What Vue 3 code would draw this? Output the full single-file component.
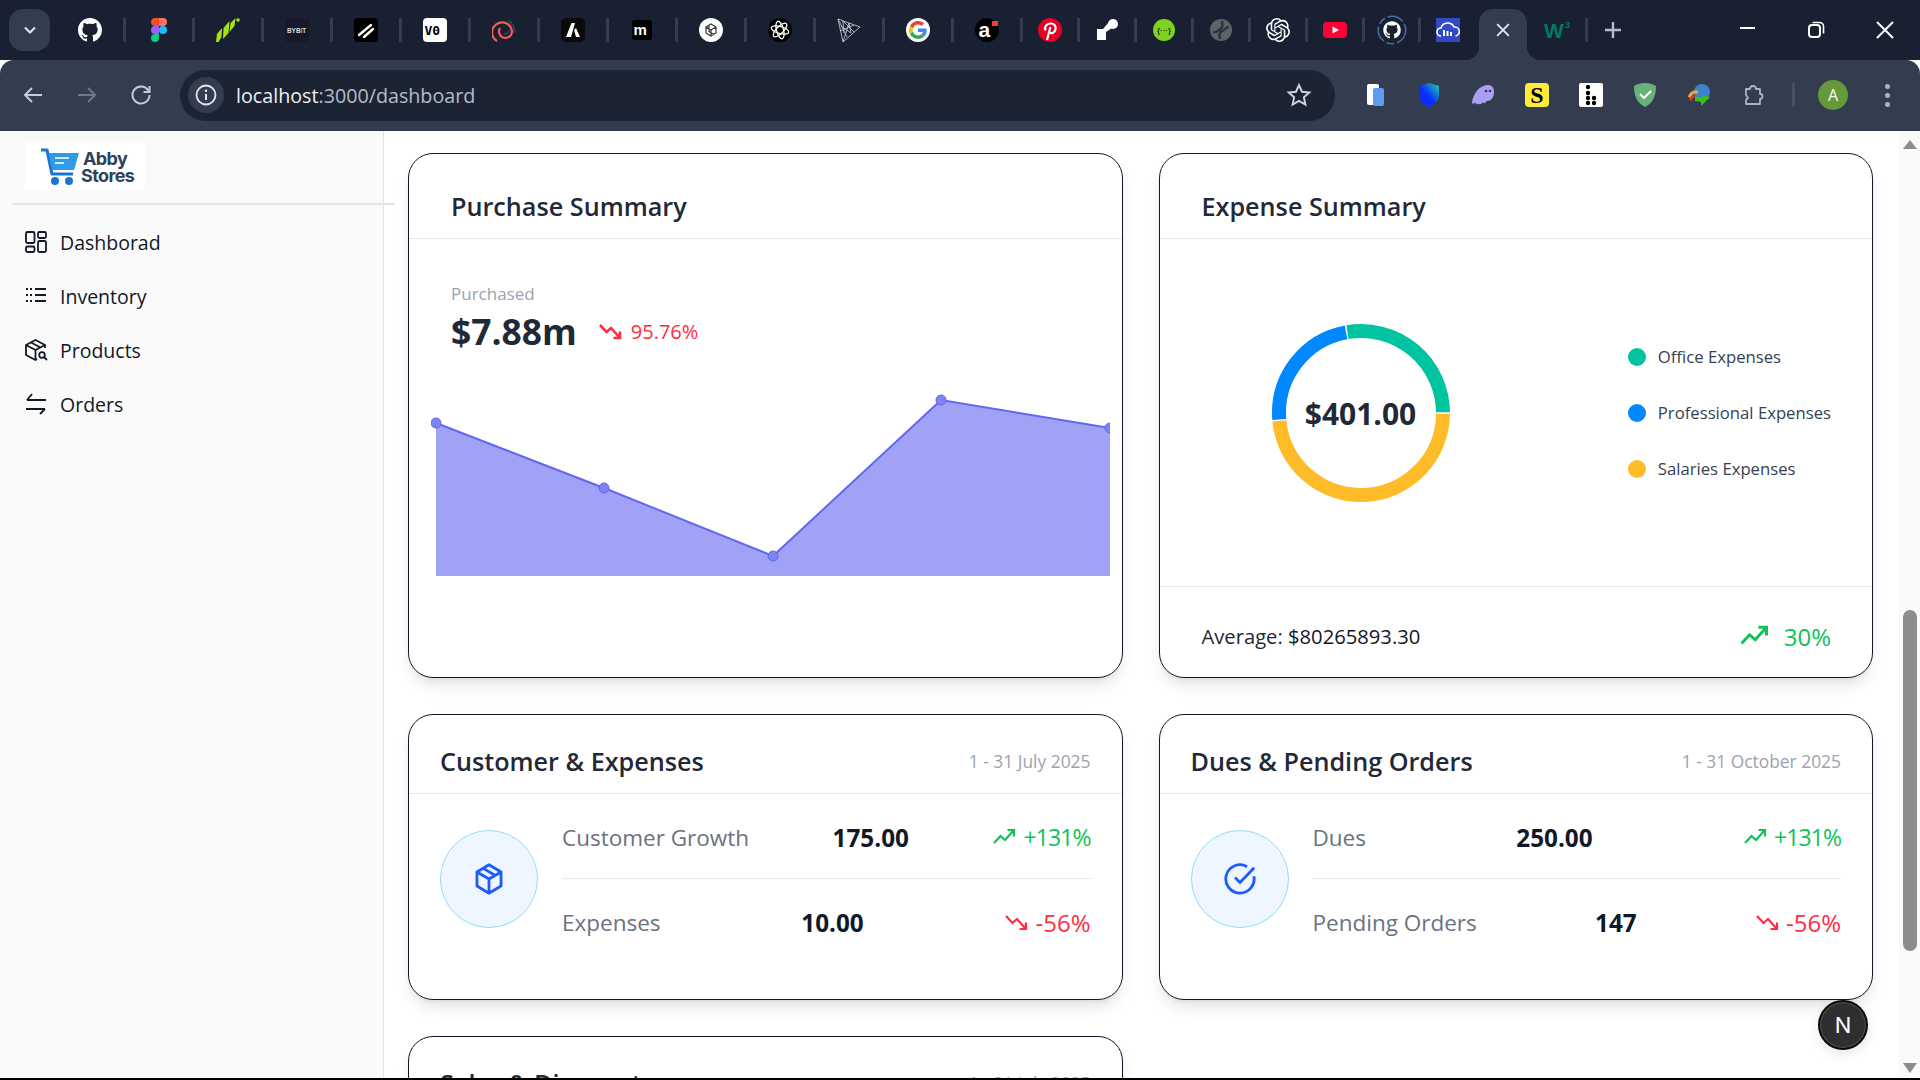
<template>
  <div class="window">
    <!-- Browser tab strip -->
    <div class="tabstrip">
      <button class="tab-search">
        <svg viewBox="0 0 24 24" width="20" height="20"><path d="M6 9l6 6 6-6" fill="none" stroke="#e5e7eb" stroke-width="2.4" /></svg>
      </button>
      <div
        v-for="tab in tabs"
        :key="tab.name"
        class="tab"
        :class="{ 'has-sep': tab.sep }"
        :style="{ width: tab.w + 'px' }"
      >
        <svg class="favicon" :class="{ big: tab.big }" viewBox="0 0 24 24" v-html="tab.icon"></svg>
      </div>
      <div class="tab-active">
        <svg viewBox="0 0 24 24" width="20" height="20"><path d="M5 5l14 14M19 5L5 19" stroke="#e8eaed" stroke-width="2.2" /></svg>
      </div>
      <div class="tab has-sep tab-w3">
        <svg class="favicon w3" viewBox="0 0 34 24">
          <text x="4" y="20" class="w3-w">W</text>
          <text x="25" y="10" class="w3-three">3</text>
        </svg>
      </div>
      <div class="new-tab">
        <svg viewBox="0 0 24 24" width="24" height="24"><path d="M12 4v16M4 12h16" stroke="#b4bdd0" stroke-width="2.4" /></svg>
      </div>
      <div class="window-controls">
        <svg viewBox="0 0 24 24" width="24" height="24"><path d="M5 10h15" stroke="#fff" stroke-width="2" /></svg>
        <svg viewBox="0 0 24 24" width="24" height="24"><rect x="5" y="7" width="11" height="12" rx="3" fill="none" stroke="#fff" stroke-width="2" /><path d="M8.500 4.500h7a4 4 0 0 1 4 4v7" fill="none" stroke="#fff" stroke-width="1.600" /></svg>
        <svg viewBox="0 0 24 24" width="24" height="24"><path d="M4 4l16 16M20 4L4 20" stroke="#fff" stroke-width="2" /></svg>
      </div>
    </div>

    <!-- Browser toolbar -->
    <div class="toolbar">
      <div class="nav-buttons">
        <svg viewBox="0 0 24 24" width="24" height="24"><path d="M21 12H4M11 5l-7 7 7 7" fill="none" stroke="#c4cbd9" stroke-width="2" /></svg>
        <svg viewBox="0 0 24 24" width="24" height="24"><path d="M3 12h17M13 5l7 7-7 7" fill="none" stroke="#6f788a" stroke-width="2" /></svg>
        <svg viewBox="0 0 24 24" width="24" height="24"><path d="M19.500 8A8.500 8.500 0 1 0 20.500 12" fill="none" stroke="#c4cbd9" stroke-width="2" /><path d="M20.500 3v6h-6" fill="none" stroke="#c4cbd9" stroke-width="2" /></svg>
      </div>
      <div class="omnibox">
        <div class="site-info">
          <svg viewBox="0 0 24 24" width="24" height="24"><circle cx="12" cy="12" r="9.500" fill="none" stroke="#e5e7eb" stroke-width="1.800" /><path d="M12 11v6" stroke="#e5e7eb" stroke-width="2" /><circle cx="12" cy="7.700" r="1.200" fill="#e5e7eb" /></svg>
        </div>
        <span class="url"><span class="url-host">localhost</span>:3000/dashboard</span>
        <svg class="star" viewBox="0 0 24 24" width="26" height="26"><path d="M12 2.800l2.800 6.200 6.700.7-5 4.500 1.400 6.600L12 17.400l-5.900 3.400 1.400-6.600-5-4.500 6.700-.7z" fill="none" stroke="#d1d5db" stroke-width="1.800" /></svg>
      </div>
      <div class="extensions">
        <svg v-for="ext in extensions" :key="ext.name" viewBox="0 0 24 24" width="24" height="24" v-html="ext.icon"></svg>
        <span class="toolbar-sep"></span>
        <span class="avatar">A</span>
        <span class="menu-dots"><i></i><i></i><i></i></span>
      </div>
    </div>

    <div class="page">
      <!-- Sidebar -->
      <aside class="sidebar">
        <div class="logo">
          <svg viewBox="0 0 40 38" width="40" height="38">
            <path d="M1 2h6l5 24h21" fill="none" stroke="#1a73d9" stroke-width="3.200" stroke-linejoin="round" />
            <path d="M9 5h30l-5 17H12z" fill="#2f9be6" />
            <path d="M15 10h14M15 15h9" stroke="#cfe9fb" stroke-width="2" />
            <circle cx="15" cy="33" r="4" fill="#1a73d9" />
            <circle cx="29" cy="33" r="4" fill="#1a73d9" />
          </svg>
          <div class="logo-text">
            <span class="logo-abby">Abby</span>
            <span>Stores</span>
          </div>
        </div>
        <div class="sidebar-divider"></div>
        <nav class="menu">
          <a v-for="item in menu" :key="item.label" class="menu-item">
            <svg viewBox="0 0 24 24" width="24" height="24" v-html="item.icon"></svg>
            <span>{{ item.label }}</span>
          </a>
        </nav>
      </aside>

      <!-- Dashboard cards -->
      <main class="content">
        <section class="card">
          <header class="card-head tall">
            <h2>Purchase Summary</h2>
          </header>
          <div class="purchase-stat">
            <div class="stat-label">Purchased</div>
            <div class="stat-row">
              <span class="stat-value">$7.88m</span>
              <svg viewBox="0 0 24 24" width="30" height="24"><path :d="trendDown" fill="none" stroke="#ff2d3f" stroke-width="2.600" /></svg>
              <span class="stat-change">95.76%</span>
            </div>
          </div>
          <svg class="area-chart" viewBox="0 0 680 190" width="680" height="190">
            <defs>
              <clipPath id="plot"><rect x="0" y="0" width="679" height="190" /></clipPath>
            </defs>
            <g clip-path="url(#plot)">
              <polygon :points="areaPoints" fill="#a0a3f5" />
              <polyline :points="linePoints" fill="none" stroke="#6366f1" stroke-width="2" />
              <circle v-for="p in chartPoints" :key="p[0]" :cx="p[0]" :cy="p[1]" r="5" fill="#7f82f3" stroke="#6366f1" stroke-width="1" />
            </g>
          </svg>
        </section>

        <section class="card">
          <header class="card-head tall">
            <h2>Expense Summary</h2>
          </header>
          <div class="expense-body">
            <div class="donut">
              <svg viewBox="0 0 180 180" width="180" height="180">
                <path v-for="seg in segments" :key="seg.color" :d="seg.d" fill="none" :stroke="seg.color" stroke-width="14" />
              </svg>
              <span class="donut-value">$401.00</span>
            </div>
            <ul class="legend">
              <li v-for="l in legend" :key="l.label">
                <i :style="{ background: l.color }"></i>{{ l.label }}
              </li>
            </ul>
          </div>
          <footer class="expense-foot">
            <span class="average">Average: <b>$80265893.30</b></span>
            <span class="foot-change">
              <svg viewBox="0 0 24 24" width="36" height="30"><path :d="trendUp" fill="none" stroke="#0fc156" stroke-width="2.400" /></svg>
              30%
            </span>
          </footer>
        </section>

        <section v-for="card in statCards" :key="card.title" class="card">
          <header class="card-head">
            <h2>{{ card.title }}</h2>
            <span class="date">{{ card.date }}</span>
          </header>
          <div class="stat-body">
            <div class="icon-circle">
              <svg viewBox="0 0 24 24" width="34" height="34" v-html="card.icon"></svg>
            </div>
            <div class="stat-rows">
              <div v-for="row in card.rows" :key="row.label" class="stat-line">
                <span class="line-label">{{ row.label }}</span>
                <span class="line-value">{{ row.value }}</span>
                <span class="line-change" :class="row.up ? 'up' : 'down'">
                  <svg viewBox="0 0 24 24" width="24" height="24"><path :d="row.up ? trendUp : trendDown" fill="none" stroke="currentColor" stroke-width="2.200" /></svg>
                  {{ row.change }}
                </span>
              </div>
            </div>
          </div>
        </section>
      </main>

      <!-- Scrollbar -->
      <div class="scrollbar">
        <i class="arrow-up"></i>
        <div class="thumb"></div>
        <i class="arrow-down"></i>
      </div>

      <button class="dev-badge">N</button>
    </div>
  </div>
</template>

<script setup>
const trendUp = 'M2 18l6.500-7 4.500 4 9-10M15.500 5H22v6.500'
const trendDown = 'M2 6l6.500 7 4.500-4 9 10M15.500 19H22v-6.500'

const gh = 'M8 0C3.58 0 0 3.58 0 8c0 3.54 2.29 6.53 5.47 7.59.4.07.55-.17.55-.38 0-.19-.01-.82-.01-1.49-2.01.37-2.53-.49-2.69-.94-.09-.23-.48-.94-.82-1.13-.28-.15-.68-.52-.01-.53.63-.01 1.08.58 1.23.82.72 1.21 1.87.87 2.33.66.07-.52.28-.87.51-1.07-1.78-.2-3.64-.89-3.64-3.95 0-.87.31-1.59.82-2.15-.08-.2-.36-1.02.08-2.12 0 0 .67-.21 2.2.82.64-.18 1.32-.27 2-.27.68 0 1.36.09 2 .27 1.53-1.04 2.2-.82 2.2-.82.44 1.1.16 1.92.08 2.12.51.56.82 1.27.82 2.15 0 3.07-1.87 3.75-3.65 3.95.29.25.54.73.54 1.48 0 1.07-.01 1.93-.01 2.2 0 .21.15.46.55.38A8.013 8.013 0 0016 8c0-4.42-3.58-8-8-8z'

const gpt = 'M22.2819 9.8211a5.9847 5.9847 0 0 0-.5157-4.9108 6.0462 6.0462 0 0 0-6.5098-2.9A6.0651 6.0651 0 0 0 4.9807 4.1818a5.9847 5.9847 0 0 0-3.9977 2.9 6.0462 6.0462 0 0 0 .7427 7.0966 5.98 5.98 0 0 0 .511 4.9107 6.051 6.051 0 0 0 6.5146 2.9001A5.9847 5.9847 0 0 0 13.2599 24a6.0557 6.0557 0 0 0 5.7718-4.2058 5.9894 5.9894 0 0 0 3.9977-2.9001 6.0557 6.0557 0 0 0-.7475-7.0729zm-9.022 12.6081a4.4755 4.4755 0 0 1-2.8764-1.0408l.1419-.0804 4.7783-2.7582a.7948.7948 0 0 0 .3927-.6813v-6.7369l2.02 1.1686a.071.071 0 0 1 .038.052v5.5826a4.504 4.504 0 0 1-4.4945 4.4944zm-9.6607-4.1254a4.4708 4.4708 0 0 1-.5346-3.0137l.142.0852 4.783 2.7582a.7712.7712 0 0 0 .7806 0l5.8428-3.3685v2.3324a.0804.0804 0 0 1-.0332.0615L9.74 19.9502a4.4992 4.4992 0 0 1-6.1408-1.6464zM2.3408 7.8956a4.485 4.485 0 0 1 2.3655-1.9728V11.6a.7664.7664 0 0 0 .3879.6765l5.8144 3.3543-2.0201 1.1685a.0757.0757 0 0 1-.071 0l-4.8303-2.7865A4.504 4.504 0 0 1 2.3408 7.872zm16.5963 3.8558L13.1038 8.364 15.1192 7.2a.0757.0757 0 0 1 .071 0l4.8303 2.7913a4.4944 4.4944 0 0 1-.6765 8.1042v-5.6772a.79.79 0 0 0-.407-.667zm2.0107-3.0231l-.142-.0852-4.7735-2.7818a.7759.7759 0 0 0-.7854 0L9.409 9.2297V6.8974a.0662.0662 0 0 1 .0284-.0615l4.8303-2.7866a4.4992 4.4992 0 0 1 6.6802 4.66zM8.3065 12.863l-2.02-1.1638a.0804.0804 0 0 1-.038-.0567V6.0742a4.4992 4.4992 0 0 1 7.3757-3.4537l-.142.0805L8.704 5.459a.7948.7948 0 0 0-.3927.6813zm1.0976-2.3654l2.602-1.4998 2.6069 1.4998v2.9994l-2.5974 1.4997-2.6067-1.4997Z'

const tabs = [
  { name: 'github', w: 69, sep: true, icon: `<path transform="scale(1.5)" fill="#fff" d="${gh}"/>` },
  { name: 'figma', w: 69, sep: true, icon: '<path fill="#f24e1e" d="M12 0H8a4 4 0 0 0 0 8h4z"/><path fill="#ff7262" d="M12 0h4a4 4 0 0 1 0 8h-4z"/><path fill="#a259ff" d="M12 8H8a4 4 0 0 0 0 8h4z"/><circle cx="16" cy="12" r="4" fill="#1abcfe"/><path fill="#0acf83" d="M8 16h4v4a4 4 0 1 1-4-4z"/>' },
  { name: 'chart', w: 69, sep: true, icon: '<path fill="#a6e313" d="M0 24l1-8 5-6-.5 9-3 5zM7 21l.5-11 6-7-1 12zM13.500 14l1-9 5-5-1 8z"/><circle cx="22" cy="2" r="1.800" fill="#a6e313"/>' },
  { name: 'bybit', w: 69, sep: true, icon: '<rect width="24" height="24" fill="#15192b"/><text x="2" y="14.500" class="fav-small" fill="#d8dbe2">BYB<tspan fill="#f7a600">I</tspan>T</text>' },
  { name: 'slash', w: 69, sep: true, icon: '<rect width="24" height="24" rx="4" fill="#000"/><path d="M5 17L17 7M10 19l9-8" stroke="#fff" stroke-width="2.400" stroke-linecap="round"/>' },
  { name: 'v0', w: 69, sep: true, icon: '<rect width="24" height="24" rx="4" fill="#fff"/><text x="1.500" y="16.500" class="fav-mono" font-size="13" fill="#000">V0</text>' },
  { name: 'spiral', w: 69, sep: true, icon: '<path d="M16 3a10 10 0 0 1 6 12M12 16a5 5 0 0 0 5-4" fill="none" stroke="#333d4f" stroke-width="2"/><path d="M5 23A10 10 0 1 1 20 13a6.500 6.500 0 1 1-12-3" fill="none" stroke="#f45b5b" stroke-width="2.200"/>' },
  { name: 'lambda', w: 69, sep: true, icon: '<rect width="24" height="24" rx="5" fill="#0a0a0a"/><path d="M5 19L10.500 5h3.500l-4 14zM13 12l2-2 4 9h-4z" fill="#fff"/>' },
  { name: 'medium', w: 69, sep: true, icon: '<rect x="2" y="2" width="20" height="20" rx="3" fill="#000"/><text x="3.500" y="17" class="fav-bold" font-size="15" fill="#fff">m</text>' },
  { name: 'cube', w: 69, sep: true, icon: '<circle cx="12" cy="12" r="12" fill="#fff"/><path d="M7 9l5-3 5 3v6l-5 3-5-3zM10 7.500v6l5 3M7 9l5 3v6M12 12l5-3" fill="none" stroke="#333" stroke-width="1.200"/>' },
  { name: 'atom', w: 69, sep: true, icon: '<circle cx="12" cy="12" r="12" fill="#000"/><g fill="none" stroke="#fff" stroke-width="1.300"><ellipse cx="12" cy="12" rx="9" ry="3.500" transform="rotate(15 12 12)"/><ellipse cx="12" cy="12" rx="9" ry="3.500" transform="rotate(75 12 12)"/><ellipse cx="12" cy="12" rx="9" ry="3.500" transform="rotate(135 12 12)"/></g>' },
  { name: 'mesh', w: 69, sep: true, icon: '<g fill="none" stroke="#c0c5cf" stroke-width=".9"><path d="M1 1l22 8-17 15zM6 3l1 12M12 5L6 24M17 7L3 13M1 1l9 18M6 3l11 11M12 5l2 10M4 8l10 7"/></g>' },
  { name: 'google', w: 69, sep: true, icon: '<circle cx="12" cy="12" r="12" fill="#fff"/><g transform="translate(3 3) scale(.375)"><path fill="#EA4335" d="M24 9.500c3.540 0 6.710 1.220 9.210 3.600l6.850-6.850C35.900 2.380 30.470 0 24 0 14.620 0 6.510 5.380 2.560 13.220l7.980 6.190C12.430 13.720 17.740 9.500 24 9.500z"/><path fill="#4285F4" d="M46.980 24.550c0-1.570-.15-3.090-.38-4.550H24v9.020h12.940c-.58 2.960-2.260 5.480-4.780 7.180l7.730 6c4.510-4.180 7.090-10.360 7.090-17.650z"/><path fill="#FBBC05" d="M10.530 28.590c-.48-1.450-.76-2.990-.76-4.590s.27-3.140.76-4.590l-7.980-6.190C.92 16.460 0 20.120 0 24c0 3.880.92 7.540 2.560 10.780l7.970-6.190z"/><path fill="#34A853" d="M24 48c6.480 0 11.930-2.130 15.890-5.810l-7.730-6c-2.150 1.450-4.920 2.300-8.160 2.300-6.260 0-11.570-4.220-13.470-9.910l-7.980 6.190C6.510 42.620 14.620 48 24 48z"/></g>' },
  { name: 'aparat', w: 69, sep: true, icon: '<circle cx="12" cy="12" r="12" fill="#000"/><text x="3.500" y="19" class="fav-bold" font-size="21" fill="#fff">a</text><rect x="17" y="3" width="6" height="5" fill="#ea4335"/>' },
  { name: 'pinterest', w: 57, sep: true, icon: '<circle cx="12" cy="12" r="12" fill="#e60023"/><path d="M9 22l3.400-13M7.500 12.500C6 9 8.500 5.500 12.500 5.500s5.800 2.800 5 6-3.800 4.500-5.500 3" fill="none" stroke="#fff" stroke-width="2.200"/>' },
  { name: 'flag', w: 57, sep: true, icon: '<path fill="#fff" d="M2 11h6l6-7 3 6-6 4v8H2z"/><circle cx="18" cy="6" r="5" fill="#fff"/>' },
  { name: 'braces', w: 57, sep: true, icon: '<circle cx="12" cy="12" r="11" fill="#7ed321"/><text x="12" y="15" text-anchor="middle" class="fav-bold" font-size="8" fill="#1c3a10">{···}</text>' },
  { name: 'globe', w: 57, sep: true, icon: '<circle cx="12" cy="12" r="11" fill="#5f6368"/><path d="M4 14c4 1 5-2 7-3s3-2 2-8M20 9c-3 0-4 3-7 4s-3 4-2 8" fill="none" stroke="#2a3242" stroke-width="2.400"/>' },
  { name: 'chatgpt', w: 57, sep: true, icon: `<path fill="#fff" d="${gpt}"/>` },
  { name: 'youtube', w: 57, sep: true, icon: '<rect y="4" width="24" height="16" rx="4" fill="#ff0033"/><path d="M9.500 8.500l6.500 3.500-6.500 3.500z" fill="#fff"/>' },
  { name: 'github-ring', w: 56, sep: true, big: true, icon: `<circle cx="12" cy="12" r="11" fill="none" stroke="#4d6a96" stroke-width="1.300" stroke-dasharray="13 2.500 6 2.500"/><path transform="translate(5 5) scale(.875)" fill="#fff" d="${gh}"/>` },
  { name: 'cloud', w: 56, sep: false, icon: '<rect width="24" height="24" fill="#3347c9"/><path d="M5 18a4 4 0 0 1 0-8 7 7 0 0 1 13-1 4.500 4.500 0 0 1 1.500 9" fill="none" stroke="#fff" stroke-width="1.600"/><path d="M8 12v6M11.500 13v5M15 14v4" stroke="#fff" stroke-width="2"/>' }
]

const extensions = [
  { name: 'pages', icon: '<rect x="4" y="1" width="12" height="21" rx="2" fill="#fff"/><rect x="10" y="5" width="11" height="18" rx="2" fill="#5e9df2"/>' },
  { name: 'shield', icon: '<defs><linearGradient id="sh" x1="0" y1="1" x2="1" y2="0"><stop offset=".45" stop-color="#0a2dff"/><stop offset="1" stop-color="#22d3a0"/></linearGradient></defs><path d="M12 0l10 3v9c0 6-5 10-10 12C7 22 2 18 2 12V3z" fill="url(#sh)"/>' },
  { name: 'ghost', icon: '<path d="M1 20C2 10 9 2 17 2c4 0 6 3 6 7 0 6-3 9-7 9-1 0-1 3-3 2-1-1-2 0-3 1s-2-1-3 0-2 0-2-1-3 2-4 0z" fill="#ab9ff2"/><circle cx="15" cy="8" r="1.300" fill="#3c315b"/><circle cx="19" cy="8" r="1.300" fill="#3c315b"/>' },
  { name: 'sans', icon: '<rect width="24" height="24" rx="4" fill="#ffe93b"/><text x="12" y="20" text-anchor="middle" class="fav-serif" font-size="24" fill="#000">S</text>' },
  { name: 'dots', icon: '<rect width="24" height="24" rx="2" fill="#fff"/><g fill="#000"><circle cx="9" cy="4" r="2.200"/><circle cx="9" cy="10" r="2.200"/><circle cx="9" cy="15" r="2.200"/><circle cx="15" cy="15" r="2.200"/><circle cx="9" cy="20" r="2.200"/><circle cx="15" cy="20" r="2.200"/></g>' },
  { name: 'adguard', icon: '<path d="M12 0C8 0 4 1 1 3c0 10 3 17 11 21 8-4 11-11 11-21-3-2-7-3-11-3z" fill="#68b178"/><path d="M7 11l4 4 7-7" fill="none" stroke="#fff" stroke-width="2"/>' },
  { name: 'idm', icon: '<circle cx="15" cy="9" r="8" fill="#3f7fd0"/><path d="M1 14c1-6 7-8 11-6l-2 3c-3-1-5 0-6 4z" fill="#e8a33a"/><path d="M2 17c1-3 3-5 6-5l-1 3c-1 0-2 1-2 3z" fill="#d1392c"/><path d="M8 13l7 2 1-3 7 2-9 9 0-4-6-1z" fill="#35c11f"/>' },
  { name: 'puzzle', icon: '<path d="M5 6h4a3 3 0 0 1 6 0h4v5a2.500 2.500 0 0 1 0 5v5H5v-4l2-2-2-3z" fill="none" stroke="#aab4c8" stroke-width="1.800" stroke-linejoin="round"/>' }
]

const menu = [
  { label: 'Dashborad', icon: '<g fill="none" stroke="#111827" stroke-width="1.800"><rect x="2" y="2" width="8.500" height="11" rx="1.500"/><rect x="14" y="2" width="8" height="6" rx="1.500"/><rect x="2" y="16.500" width="8.500" height="5.500" rx="1.500"/><rect x="14" y="11" width="8" height="11" rx="1.500"/></g>' },
  { label: 'Inventory', icon: '<path d="M2 5h2M6 5h2M2 11h2M6 11h2M2 17h2M6 17h2M11 5h11M11 11h11M11 17h11" fill="none" stroke="#111827" stroke-width="1.800"/>' },
  { label: 'Products', icon: '<g fill="none" stroke="#111827" stroke-width="1.800"><path d="M21 10V7l-9.500-5L2 7v10l9.500 5 1.500-1"/><path d="M2 7l9.500 5 9.500-5M11.500 12v10M7 4.500L16.500 9.500"/><circle cx="18" cy="17" r="2.800"/><path d="M20 19l3 3"/></g>' },
  { label: 'Orders', icon: '<path d="M22 8H3M8 2L3 8M2 17h19M16 22l5-5" fill="none" stroke="#111827" stroke-width="1.800"/>' }
]

// chart coordinates are relative to the svg box
const chartPoints = [[5, 33], [173, 98], [342, 166], [510, 10], [679, 38]]
const linePoints = chartPoints.map(p => p.join(',')).join(' ')
const areaPoints = `5,186 ${linePoints} 679,186`

// donut arcs, angle in degrees clockwise from 3 o'clock
const arc = (from, to) => {
  const r = 82
  const pt = a => [90 + r * Math.cos(a * Math.PI / 180), 90 + r * Math.sin(a * Math.PI / 180)]
  const [x1, y1] = pt(from)
  const [x2, y2] = pt(to)
  return `M${x1.toFixed(2)} ${y1.toFixed(2)}A${r} ${r} 0 ${to - from > 180 ? 1 : 0} 1 ${x2.toFixed(2)} ${y2.toFixed(2)}`
}
const segments = [
  { color: '#ffbb28', d: arc(0.5, 174.5) },
  { color: '#0088fe', d: arc(175.5, 259.5) },
  { color: '#00c49f', d: arc(260.5, 359.5) }
]

const legend = [
  { label: 'Office Expenses', color: '#00c49f' },
  { label: 'Professional Expenses', color: '#0088fe' },
  { label: 'Salaries Expenses', color: '#ffbb28' }
]

const boxIcon = '<path d="M12 2l8.500 5v10L12 22l-8.500-5V7zM3.500 7l8.500 5 8.500-5M12 12v10M8 4.500l8.500 5" fill="none" stroke="#1d5cff" stroke-width="2" stroke-linejoin="round"/>'
const checkIcon = '<path d="M21.800 10A10 10 0 1 1 17 3.300" fill="none" stroke="#1d5cff" stroke-width="2"/><path d="M8.500 11l3.500 3.500L22 4" fill="none" stroke="#1d5cff" stroke-width="2"/>'

const statCards = [
  {
    title: 'Customer & Expenses',
    date: '1 - 31 July 2025',
    icon: boxIcon,
    rows: [
      { label: 'Customer Growth', value: '175.00', change: '+131%', up: true },
      { label: 'Expenses', value: '10.00', change: '-56%', up: false }
    ]
  },
  {
    title: 'Dues & Pending Orders',
    date: '1 - 31 October 2025',
    icon: checkIcon,
    rows: [
      { label: 'Dues', value: '250.00', change: '+131%', up: true },
      { label: 'Pending Orders', value: '147', change: '-56%', up: false }
    ]
  },
  {
    title: 'Sales & Discount',
    date: '1 - 31 July 2025',
    icon: boxIcon,
    rows: [
      { label: 'Sales', value: '175.00', change: '+131%', up: true },
      { label: 'Discount', value: '10.00', change: '-56%', up: false }
    ]
  }
]
</script>

<style>
html, body {
  margin: 0;
  height: 100%;
  overflow: hidden;
  background: #000;
}
.fav-small { font: 700 6.4px "Liberation Sans", sans-serif; }
.fav-bold { font-family: "Liberation Sans", sans-serif; font-weight: 700; }
.fav-serif { font-family: "Liberation Serif", serif; font-weight: 700; }
.fav-mono { font-family: "DejaVu Sans Mono", monospace; font-weight: 700; }
</style>

<style scoped>
.window {
  width: 1920px;
  height: 1078px;
  display: flex;
  flex-direction: column;
  overflow: hidden;
  background: #fff;
  font-family: "Open Sans", "Liberation Sans", sans-serif;
  color: #1f2937;
}

/* tab strip */
.tabstrip {
  height: 60px;
  flex: none;
  display: flex;
  align-items: flex-start;
  background: #182032;
  padding: 9px 0 0 9px;
  box-sizing: border-box;
}
.tab-search {
  width: 41px;
  height: 42px;
  margin-right: 5.5px;
  padding: 0;
  border: 0;
  border-radius: 14px;
  background: #333d4f;
  display: flex;
  align-items: center;
  justify-content: center;
}
.tab {
  position: relative;
  height: 42px;
  flex: none;
  display: flex;
  align-items: center;
  justify-content: center;
}
.tab.has-sep::after {
  content: '';
  position: absolute;
  right: -1.5px;
  top: 9px;
  width: 3px;
  height: 24px;
  background: #333d4f;
}
.favicon {
  width: 24px;
  height: 24px;
}
.favicon.big {
  width: 30px;
  height: 30px;
}
.tab-active {
  position: relative;
  width: 48px;
  height: 51px;
  margin-left: 3px;
  flex: none;
  background: #333d4f;
  border-radius: 14px 14px 0 0;
  display: flex;
  align-items: center;
  justify-content: center;
  padding-bottom: 9px;
  box-sizing: border-box;
}
.tab-active::before,
.tab-active::after {
  content: '';
  position: absolute;
  bottom: 0;
  width: 14px;
  height: 14px;
}
.tab-active::before {
  left: -14px;
  background: radial-gradient(circle at 0 0, transparent 14px, #333d4f 14.5px);
}
.tab-active::after {
  right: -14px;
  background: radial-gradient(circle at 100% 0, transparent 14px, #333d4f 14.5px);
}
.tab-w3 {
  width: 60px;
}
.favicon.w3 {
  width: 34px;
  height: 24px;
}
.w3-w {
  font: 700 21px "Liberation Sans", sans-serif;
  fill: #00795e;
}
.w3-three {
  font: 700 9px "Liberation Sans", sans-serif;
  fill: #00795e;
}
.new-tab {
  width: 52px;
  height: 42px;
  display: flex;
  align-items: center;
  justify-content: center;
}
.window-controls {
  margin-left: auto;
  width: 185px;
  height: 42px;
  padding-right: 23px;
  box-sizing: border-box;
  display: flex;
  align-items: center;
  justify-content: space-between;
}

/* toolbar */
.toolbar {
  height: 70px;
  flex: none;
  display: flex;
  align-items: center;
  background: #333d4f;
  border-radius: 14px 14px 0 0;
  box-sizing: border-box;
}
.nav-buttons {
  width: 180px;
  padding: 0 27px 0 21px;
  box-sizing: border-box;
  display: flex;
  justify-content: space-between;
  flex: none;
}
.omnibox {
  width: 1155px;
  height: 51px;
  flex: none;
  box-sizing: border-box;
  background: #1c2434;
  border-radius: 26px;
  display: flex;
  align-items: center;
  padding: 0 23px 0 8px;
}
.site-info {
  width: 36px;
  height: 36px;
  border-radius: 50%;
  background: #333d4f;
  display: flex;
  align-items: center;
  justify-content: center;
}
.url {
  margin-left: 12px;
  font-size: 19.7px;
  color: #b5bcc9;
  flex: 1;
}
.url-host {
  color: #eef0f4;
}
.extensions {
  flex: 1;
  display: flex;
  align-items: center;
  padding-left: 28px;
  gap: 30px;
}
.toolbar-sep {
  width: 3px;
  height: 24px;
  background: #475164;
  margin-left: -3px;
}
.avatar {
  width: 30px;
  height: 30px;
  margin-left: -7px;
  border-radius: 50%;
  background: #65993a;
  color: #fff;
  font-size: 16px;
  display: flex;
  align-items: center;
  justify-content: center;
}
.menu-dots {
  display: flex;
  flex-direction: column;
  gap: 4px;
  margin-left: 6.5px;
}
.menu-dots i {
  width: 5px;
  height: 5px;
  border-radius: 50%;
  background: #aab4c8;
}

/* page */
.page {
  flex: 1;
  min-height: 0;
  display: flex;
  border-top: 1px solid #2d3748;
  position: relative;
}
.sidebar {
  width: 384px;
  flex: none;
  box-sizing: border-box;
  background: #fafafa;
  border-right: 1px solid #e5e5e5;
}
.logo {
  width: 120px;
  height: 47px;
  margin: 12px 0 0 25px;
  background: #fff;
  display: flex;
  align-items: center;
  padding-left: 15px;
  box-sizing: border-box;
  gap: 1px;
}
.logo-text {
  display: flex;
  flex-direction: column;
  font: 700 18px/17px "Inter", sans-serif;
  color: #2c4257;
  letter-spacing: -0.6px;
}
.logo-abby {
  margin-left: 2px;
}
.sidebar-divider {
  width: 383px;
  height: 2px;
  margin: 13px 0 0 12px;
  background: #e5e5e5;
}
.menu {
  display: flex;
  flex-direction: column;
  margin-top: 10px;
}
.menu-item {
  height: 54px;
  padding-left: 24px;
  display: flex;
  align-items: center;
  gap: 12px;
  font-size: 19.5px;
  color: #111827;
}

/* cards */
.content {
  flex: 1;
  min-width: 0;
  overflow: hidden;
  padding: 22px 26px 0 24px;
  display: grid;
  grid-template-columns: 1fr 1fr;
  grid-auto-rows: 286px;
  grid-template-rows: 525px;
  gap: 36px;
}
.card {
  border: 1px solid #111827;
  border-radius: 25px;
  background: #fff;
  box-shadow: 0 10px 15px -3px rgba(0, 0, 0, 0.1), 0 4px 6px -4px rgba(0, 0, 0, 0.1);
  box-sizing: border-box;
  display: flex;
  flex-direction: column;
}
.card-head {
  height: 79px;
  flex: none;
  box-sizing: border-box;
  border-bottom: 1px solid #e5e7eb;
  padding: 28px 31px 0;
  display: flex;
  justify-content: space-between;
}
.card-head.tall {
  height: 85px;
  padding: 34px 42px 0;
}
.card-head h2 {
  margin: 0;
  font-size: 25.2px;
  line-height: 36px;
  font-weight: 600;
  color: #1f2937;
}
.date {
  font-size: 17.4px;
  line-height: 36px;
  color: #9ca3af;
}

/* purchase */
.purchase-stat {
  padding: 43px 42px 0;
}
.stat-label {
  font-size: 17px;
  line-height: 24px;
  color: #9ca3af;
}
.stat-row {
  margin-top: 3px;
  height: 44px;
  display: flex;
  align-items: center;
}
.stat-value {
  font-size: 35.4px;
  font-weight: 700;
  color: #1f2937;
  margin-right: 18px;
}
.stat-change {
  font-size: 20px;
  color: #ff2d3f;
  margin-left: 6px;
}
.area-chart {
  display: block;
  margin: 37px 0 0 22px;
  overflow: visible;
}

/* expense */
.expense-body {
  height: 347px;
  flex: none;
  box-sizing: border-box;
  padding: 0 41px 0 111px;
  display: flex;
  align-items: center;
  justify-content: space-between;
}
.donut {
  position: relative;
  width: 180px;
  height: 180px;
}
.donut svg {
  display: block;
}
.donut-value {
  position: absolute;
  inset: 0;
  padding-top: 2px;
  display: flex;
  align-items: center;
  justify-content: center;
  font-size: 30px;
  font-weight: 700;
  color: #1f2937;
}
.legend {
  list-style: none;
  margin: 0;
  padding: 0;
  display: flex;
  flex-direction: column;
  gap: 32px;
}
.legend li {
  display: flex;
  align-items: center;
  gap: 12px;
  font-size: 16.7px;
  line-height: 24px;
  color: #374151;
}
.legend i {
  width: 18px;
  height: 18px;
  border-radius: 50%;
}
.expense-foot {
  flex: 1;
  border-top: 1px solid #e5e7eb;
  padding: 8px 41px 0 42px;
  display: flex;
  align-items: center;
  justify-content: space-between;
}
.average {
  font-size: 20.2px;
  color: #1f2937;
}
.average b {
  font-weight: 500;
  color: #111827;
}
.foot-change {
  display: flex;
  align-items: center;
  gap: 12px;
  font-size: 24px;
  color: #0fc156;
}

/* stat cards */
.stat-body {
  padding: 25px 31px 0;
  display: flex;
  gap: 24px;
}
.icon-circle {
  width: 98px;
  height: 98px;
  flex: none;
  margin-top: 11px;
  box-sizing: border-box;
  border-radius: 50%;
  background: #eff6ff;
  border: 1px solid #93dcfb;
  display: flex;
  align-items: center;
  justify-content: center;
}
.stat-rows {
  flex: 1;
  min-width: 0;
}
.stat-line {
  height: 36px;
  display: flex;
  align-items: center;
  justify-content: space-between;
}
.stat-line:first-child {
  padding-bottom: 23px;
  border-bottom: 1px solid #e5e7eb;
  box-sizing: content-box;
}
.stat-line:last-child {
  margin-top: 25px;
}
.line-label {
  font-size: 22.5px;
  color: #6b7280;
}
.line-value {
  font-size: 24.3px;
  font-weight: 700;
  color: #111827;
}
.line-change {
  display: flex;
  align-items: center;
  gap: 7px;
  font-size: 24px;
}
.line-change.up {
  color: #0fc156;
  font-size: 23px;
  letter-spacing: -0.9px;
}
.line-change.down {
  color: #ff2d3f;
}

/* scrollbar */
.scrollbar {
  width: 21px;
  flex: none;
  background: #fafafa;
  display: flex;
  flex-direction: column;
  align-items: center;
  position: relative;
  box-sizing: border-box;
  padding-top: 9px;
}
.arrow-up,
.arrow-down {
  width: 0;
  height: 0;
  border-left: 7px solid transparent;
  border-right: 7px solid transparent;
}
.arrow-up {
  border-bottom: 9px solid #8c8c8c;
}
.arrow-down {
  border-top: 10px solid #8c8c8c;
  margin-top: 112px;
}
.thumb {
  width: 14px;
  height: 341px;
  margin-top: 461px;
  border-radius: 7px;
  background: #8c8c8c;
}

.dev-badge {
  position: absolute;
  right: 52px;
  bottom: 28px;
  width: 50px;
  height: 50px;
  padding: 0;
  border-radius: 50%;
  border: 2px solid #0b0b0b;
  background: #2f2f2f;
  box-shadow: inset 0 0 0 1px #555, 0 4px 12px rgba(0, 0, 0, 0.1);
  color: #fff;
  font: 400 22px "Inter", sans-serif;
}
</style>
